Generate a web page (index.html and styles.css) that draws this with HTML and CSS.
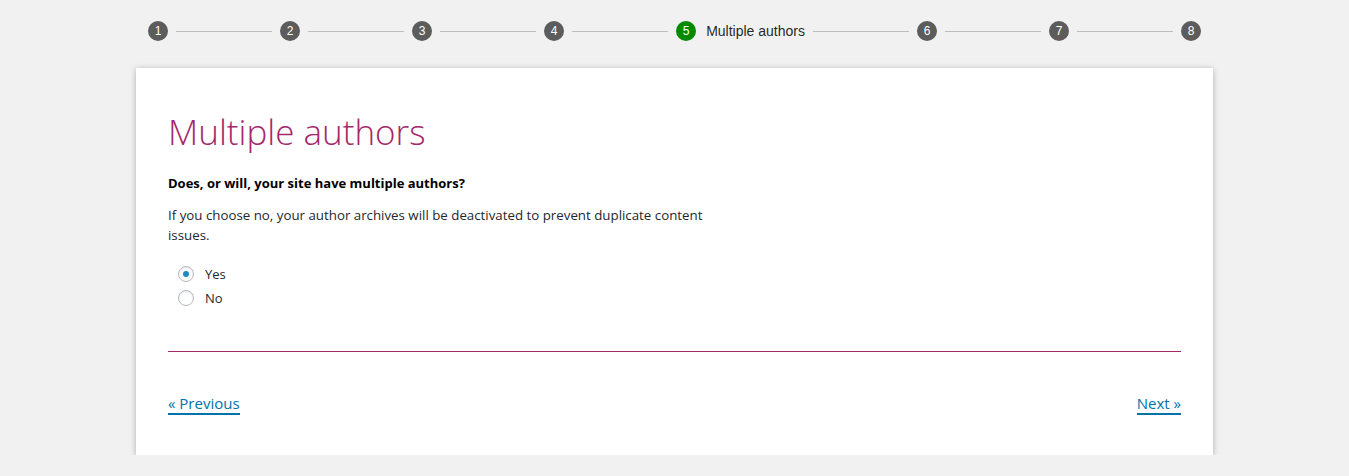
FILE: index.html
```html
<!DOCTYPE html>
<html lang="en">
<head>
    <meta charset="UTF-8">
    <meta name="viewport" content="width=device-width, initial-scale=1.0">
    <title>Configuration wizard - Multiple authors</title>
    <link rel="stylesheet" href="styles.css">
</head>
<body>

    <div class="wizard">
        <div class="stepper">
            <div class="step"><span class="step-icon">1</span></div>
            <div class="connector"></div>
            <div class="step"><span class="step-icon">2</span></div>
            <div class="connector"></div>
            <div class="step"><span class="step-icon">3</span></div>
            <div class="connector"></div>
            <div class="step"><span class="step-icon">4</span></div>
            <div class="connector"></div>
            <div class="step active"><span class="step-icon">5</span><span class="step-label">Multiple authors</span></div>
            <div class="connector"></div>
            <div class="step"><span class="step-icon">6</span></div>
            <div class="connector"></div>
            <div class="step"><span class="step-icon">7</span></div>
            <div class="connector"></div>
            <div class="step"><span class="step-icon">8</span></div>
        </div>

        <div class="card">
            <h1 class="card-title">Multiple authors</h1>
            <p class="question">Does, or will, your site have multiple authors?</p>
            <p class="description">If you choose no, your author archives will be deactivated to prevent duplicate content issues.</p>

            <div class="choices">
                <label class="choice">
                    <input type="radio" name="multiple-authors" value="yes" checked>
                    <span class="radio"></span>
                    Yes
                </label>
                <label class="choice">
                    <input type="radio" name="multiple-authors" value="no">
                    <span class="radio"></span>
                    No
                </label>
            </div>

            <hr class="divider">

            <div class="nav">
                <a href="#" class="nav-link">&laquo; Previous</a>
                <a href="#" class="nav-link">Next &raquo;</a>
            </div>
        </div>
    </div>

</body>
</html>
```

FILE: styles.css
```css
body {
    margin: 0;
    padding: 0;
    background-color: #f1f1f1;
    font-family: "Open Sans", "Noto Sans", sans-serif;
    color: #23282d;
}
.wizard {
    width: 1077px;
    margin: 0 auto;
}
.stepper {
    display: flex;
    align-items: center;
    height: 62px;
    padding: 0 4px;
    font-family: "Liberation Sans", Arial, sans-serif;
}
.step {
    display: flex;
    align-items: center;
    padding: 0 8px;
}
.step-icon {
    width: 20px;
    height: 20px;
    border-radius: 50%;
    background-color: #5c5c5c;
    color: #fff;
    font-size: 12px;
    line-height: 20px;
    text-align: center;
}
.step.active .step-icon {
    background-color: #008a00;
}
.step-label {
    margin-left: 10px;
    font-size: 14px;
    color: rgba(0, 0, 0, 0.87);
}
.connector {
    flex: 1;
    border-top: 1px solid #bdbdbd;
}
.card {
    margin-top: 6px;
    background-color: #fff;
    box-shadow: 0 1px 6px rgba(0, 0, 0, 0.28);
    padding: 40px 32px 40px;
}
.card-title {
    margin: 0 0 17px;
    font-size: 35px;
    font-weight: 300;
    line-height: 48px;
    color: #a4286a;
}
.question {
    margin: 0 0 12px;
    font-size: 13px;
    line-height: 20px;
    font-weight: bold;
    color: #000;
}
.description {
    margin: 0 0 17px;
    max-width: 560px;
    font-size: 13.3px;
    line-height: 20px;
}
.choices {
    margin-left: 10px;
}
.choice {
    display: flex;
    align-items: center;
    height: 24px;
    font-size: 13px;
}
.choice input {
    display: none;
}
.radio {
    width: 14px;
    height: 14px;
    border: 1px solid #b4b9be;
    border-radius: 50%;
    margin-right: 11px;
    box-shadow: inset 0 1px 2px rgba(0, 0, 0, 0.1);
    position: relative;
}
.choice input:checked + .radio::after {
    content: "";
    position: absolute;
    top: 4px;
    left: 4px;
    width: 6px;
    height: 6px;
    border-radius: 50%;
    background-color: #1e8cbe;
}
.divider {
    margin: 41px 0 0;
    border: 0;
    border-top: 1px solid #a4286a;
}
.nav {
    display: flex;
    justify-content: space-between;
    margin-top: 42px;
}
.nav-link {
    font-size: 15px;
    color: #0073aa;
    text-decoration: none;
    border-bottom: 2px solid #0073aa;
    line-height: 19px;
}
```
